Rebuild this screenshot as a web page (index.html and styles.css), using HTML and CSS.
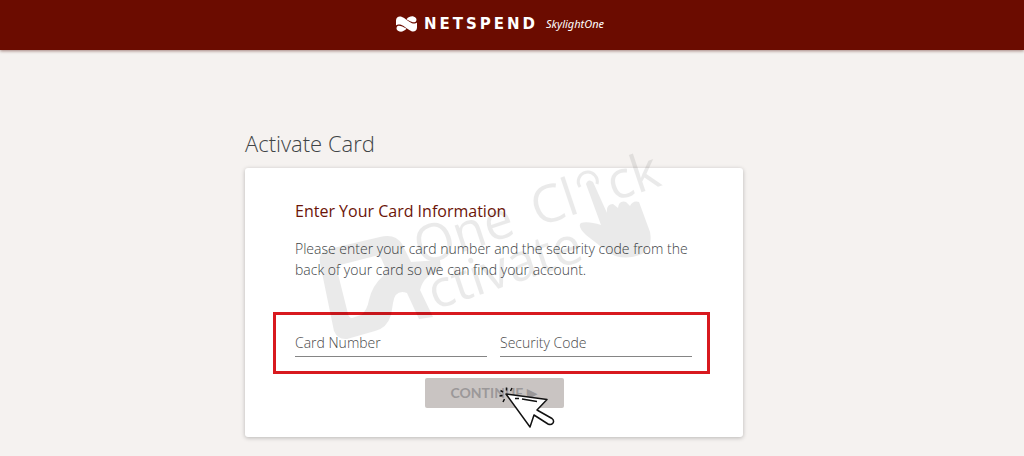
FILE: index.html
```html
<!DOCTYPE html>
<html lang="en">
<head>
<meta charset="utf-8">
<meta name="viewport" content="width=device-width, initial-scale=1">
<title>Activate Card</title>
<link rel="stylesheet" href="styles.css">
</head>
<body>
<header class="site-header">
  <svg class="logo-mark" viewBox="0 0 21 16" aria-hidden="true">
    <path d="M0 4.5C0 1 3 0 5.500 .8C9 2 12.500 6 16 7.200C18 7.800 20 7.300 21 6.500V11.500C21 15 18 16 15.500 15.200C12 14 8.500 10 5 8.800C3 8.200 1 8.700 0 9.500Z"/>
    <path d="M10.500 3.200C12.500 1 15 0 17.500 .5C20 1 21 3 20.300 4.700C19.500 6.500 17.500 6.500 15.500 5.700C13.500 5 12 4 10.500 3.200Z"/>
    <path d="M10.500 12.800C8.500 15 6 16 3.500 15.500C1 15 0 13 .7 11.300C1.500 9.500 3.500 9.500 5.500 10.300C7.500 11 9 12 10.500 12.800Z"/>
  </svg>
  <span class="logo-name">NETSPEND</span>
  <span class="logo-product">SkylightOne</span>
</header>
<main class="page">
  <div class="column">
    <h1 class="page-title">Activate Card</h1>
    <form class="card">
      <h2 class="card-title">Enter Your Card Information</h2>
      <p class="card-text">Please enter your card number and the security code from the back of your card so we can find your account.</p>
      <div class="fields">
        <input class="field" type="text" placeholder="Card Number" aria-label="Card Number">
        <input class="field" type="text" placeholder="Security Code" aria-label="Security Code">
      </div>
      <div class="actions">
        <button class="continue" type="button">CONTINUE ▶</button>
        <svg class="pointer" viewBox="496 384 60 46" aria-hidden="true">
          <path class="pointer-arrow" d="M505 394L546 399.500L536 410L551 418.500Q553.500 420.500 552 423Q550 425.500 547 424L533 415L529 427Z"/>
          <path class="pointer-line" d="M514 398.500H518M521 399L536 401.500M505.500 387.500V390.500M511 388L509.500 391M499.500 390.500L502 392M498.500 396L501.500 395.500M503.500 399L502 402"/>
        </svg>
      </div>
      <svg class="watermark" viewBox="310 135 370 210" aria-hidden="true">
        <path class="wm-fill" fill-rule="evenodd" d="M320 263Q318 252 329 249L380 237Q395 233 402 244L411 262L440 260L441 271Q424 274 420 290L433 317L419 319L407 293Q395 289 393 303L391 315Q387 328 375 331L347 339Q338 340 334 331ZM337 270Q336 266 340 265L375 256Q380 255 382 260L385 267Q387 272 383 276Q372 286 369 300Q367 311 361 315L352 318Q349 318 348 314Z"/>
        <g transform="translate(421 266) rotate(-18.500)">
          <text class="wm-text" x="0" y="0">One</text>
          <text class="wm-text" x="123" y="0">Cl</text>
          <text class="wm-text" x="203" y="0">ck</text>
          <text class="wm-text" x="-1" y="46">ctivate</text>
        </g>
        <path class="wm-ring" d="M580 187A9.500 9.500 0 1 1 597 184"/>
        <path class="wm-fill" d="M586 184Q588 178 593 182L607 213Q606 204 613 204L618 208Q619 200 626 202L630 206Q633 200 639 202L650 232Q653 249 642 254Q622 262 608 252L586 235Q577 226 581 223Q588 221 601 225Z"/>
      </svg>
    </form>
  </div>
</main>
</body>
</html>
```

FILE: styles.css
```css
* { box-sizing: border-box; }
body {
  margin: 0;
  min-height: 100vh;
  background: #f5f2f0;
  color: #404446;
  font-family: "Open Sans", "Noto Sans", sans-serif;
  font-size: 14px;
  font-weight: 300;
  font-variant-ligatures: none;
}
.site-header {
  display: flex;
  align-items: center;
  justify-content: center;
  min-height: 50px;
  padding: 0 24px 2px 0;
  background: #6b0c00;
  color: #fff;
  box-shadow: 0 1px 3px rgba(80, 20, 10, .5);
}
.logo-mark { width: 21px; height: 16px; margin-right: 7px; fill: #fff; }
.logo-name {
  font: 700 15px/20px "DejaVu Sans", sans-serif;
  letter-spacing: 3px;
}
.logo-product {
  margin-left: 8px;
  font: italic 11px/20px "Noto Sans", sans-serif;
}
.page { padding: 78px 36px 20px 0; }
.column { max-width: 498px; margin: 0 auto; }
.page-title {
  margin: 0 0 10px;
  font-size: 22px;
  line-height: 30px;
  font-weight: 300;
}
.card {
  position: relative;
  padding: 33px 50px 29px;
  background: #fff;
  border-radius: 3px;
  box-shadow: 0 1px 4px rgba(0, 0, 0, .25);
}
.card-title {
  margin: 0 0 17px;
  color: #6b1408;
  font-size: 16px;
  line-height: 20px;
  font-weight: 400;
}
.card-text { margin: 0 -12px 32px 0; line-height: 21px; }
.fields {
  display: flex;
  gap: 13px;
  margin: 0 -17px 4px -22px;
  padding: 12px 15px 14px 19px;
  border: 3px solid #d8191f;
}
.field {
  flex: 1;
  min-width: 0;
  height: 30px;
  padding: 2px 0 0;
  border: 0;
  border-bottom: 1px solid #858585;
  border-radius: 0;
  background: transparent;
  color: inherit;
  font: inherit;
}
.field::placeholder { color: #4a4a4a; opacity: 1; }
.actions {
  position: relative;
  width: 139px;
  margin: 0 auto;
}
.continue {
  display: block;
  width: 100%;
  height: 30px;
  padding: 0;
  border: 0;
  border-radius: 2px;
  background: #c9c4c2;
  color: #9b9899;
  font: 700 14px/30px Lato, "DejaVu Sans", sans-serif;
}
.pointer {
  position: absolute;
  left: 72px;
  top: 6px;
  width: 60px;
  height: 46px;
  pointer-events: none;
}
.pointer-arrow { fill: #fff; stroke: #111; stroke-width: 1.5; stroke-linejoin: round; }
.pointer-line { fill: none; stroke: #111; stroke-width: 1.5; }
.watermark {
  position: absolute;
  left: 65px;
  top: -33px;
  width: 370px;
  height: 210px;
  overflow: visible;
  opacity: .08;
  pointer-events: none;
}
.wm-ring { fill: none; stroke: #000; stroke-width: 3; }
.wm-fill { fill: #000; }
.wm-text { font: 52px "Open Sans", sans-serif; fill: #000; }
```
